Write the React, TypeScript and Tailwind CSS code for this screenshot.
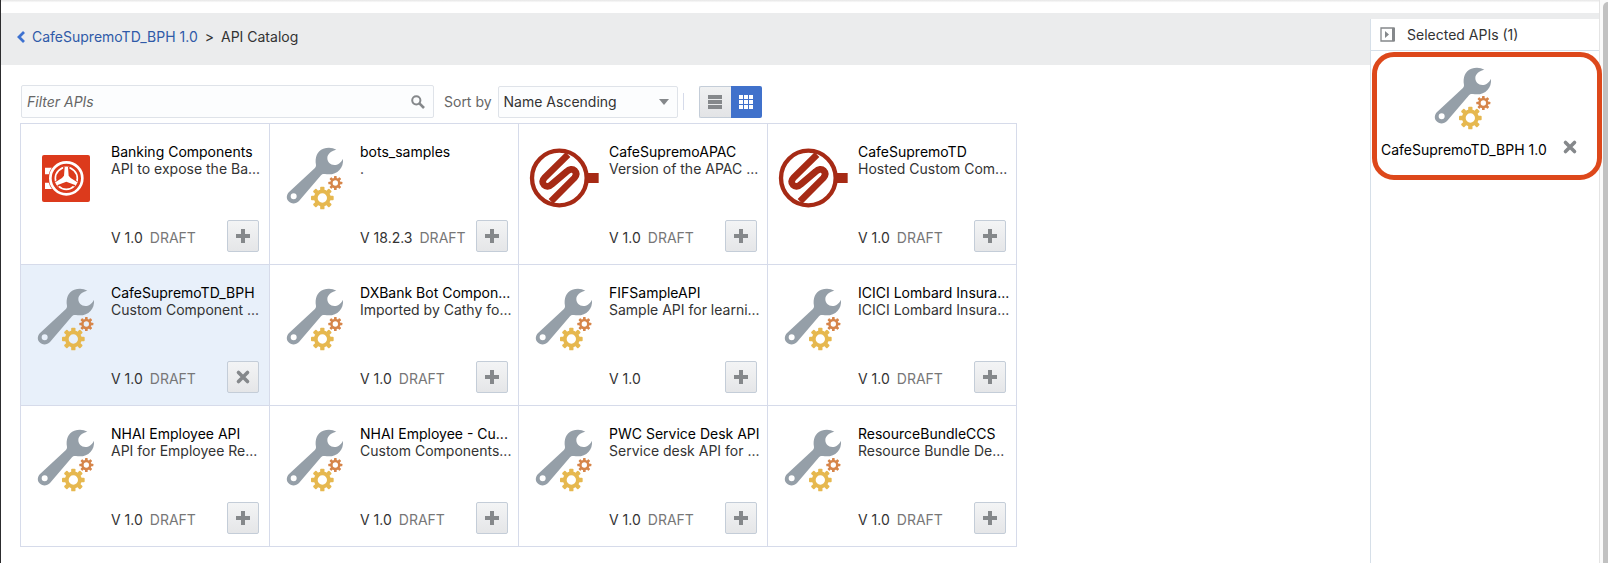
import React from "react";

type Art = "wrench" | "vault" | "supremo";
type Api = { name: string; text: string; version: string; draft: boolean; art: Art; selected?: boolean };

const apis: Api[] = [
  { name: "Banking Components", text: "API to expose the Ba...", version: "V 1.0", draft: true, art: "vault" },
  { name: "bots_samples", text: ".", version: "V 18.2.3", draft: true, art: "wrench" },
  { name: "CafeSupremoAPAC", text: "Version of the APAC ...", version: "V 1.0", draft: true, art: "supremo" },
  { name: "CafeSupremoTD", text: "Hosted Custom Com...", version: "V 1.0", draft: true, art: "supremo" },
  { name: "CafeSupremoTD_BPH", text: "Custom Component ...", version: "V 1.0", draft: true, art: "wrench", selected: true },
  { name: "DXBank Bot Compon...", text: "Imported by Cathy fo...", version: "V 1.0", draft: true, art: "wrench" },
  { name: "FIFSampleAPI", text: "Sample API for learni...", version: "V 1.0", draft: false, art: "wrench" },
  { name: "ICICI Lombard Insura...", text: "ICICI Lombard Insura...", version: "V 1.0", draft: true, art: "wrench" },
  { name: "NHAI Employee API", text: "API for Employee Re...", version: "V 1.0", draft: true, art: "wrench" },
  { name: "NHAI Employee - Cu...", text: "Custom Components...", version: "V 1.0", draft: true, art: "wrench" },
  { name: "PWC Service Desk API", text: "Service desk API for ...", version: "V 1.0", draft: true, art: "wrench" },
  { name: "ResourceBundleCCS", text: "Resource Bundle De...", version: "V 1.0", draft: true, art: "wrench" },
];

function Gear({ x, y, r, color, hole }: { x: number; y: number; r: number; color: string; hole: number }) {
  const body = r * 0.74;
  const ring = (body + hole) / 2;
  return (
    <g transform={`translate(${x} ${y})`} fill={color}>
      <circle r={ring} fill="none" stroke={color} strokeWidth={body - hole} />
      {[0, 45, 90, 135, 180, 225, 270, 315].map((a) => (
        <rect key={a} x={-r * 0.19} y={-r} width={r * 0.38} height={r * 0.4} rx={r * 0.08} transform={`rotate(${a})`} />
      ))}
    </g>
  );
}

function Wrench() {
  return (
    <svg viewBox="0 0 180 198" className="h-[66px] w-[60px]" aria-hidden="true">
      <path
        fillRule="evenodd"
        fill="#959fa8"
        d="M154 14C143 7 128 6 115 11C96 18 89 38 93 60C93 64 92 67 89 70L13 140C4 148 3 160 10 168C18 178 33 178 42 168L108 91C111 87 115 86 120 87C152 93 177 73 174 41C168 53 158 60 148 60C136 60 127 51 127 39C127 27 139 17 154 14ZM26 145A9 9 0 1 1 26 163A9 9 0 1 1 26 145Z"
      />
      <Gear x={151} y={114} r={21} hole={8} color="#d6854a" />
      <Gear x={112} y={159} r={34} hole={14} color="#e6b84f" />
    </svg>
  );
}

function Vault() {
  return (
    <svg viewBox="0 0 144 141" className="h-[47px] w-[48px]" aria-hidden="true">
      <rect width="144" height="141" rx="6" fill="#dc3a1c" />
      <path d="M9 38H31V58H9ZM9 83H31V102H9Z" fill="#fff" />
      <circle cx="73" cy="70" r="54" fill="#dc3a1c" />
      <circle cx="73" cy="70" r="48" fill="none" stroke="#fff" strokeWidth="8" />
      <circle cx="73" cy="70" r="33" fill="none" stroke="#fff" strokeWidth="5" />
      <path d="M73 70V36M73 70L44 87M73 70L102 87" stroke="#dc3a1c" strokeWidth="19" />
      <path d="M68 36H78L80 62L86 69L106 82L101 91L73 80L45 91L40 82L60 69L66 62Z" fill="#fff" />
    </svg>
  );
}

function Supremo() {
  return (
    <svg viewBox="0 0 210 180" className="h-[60px] w-[70px]" aria-hidden="true">
      <g fill="none" stroke="#a62a15" strokeLinejoin="round">
        <circle cx="91" cy="90" r="82" strokeWidth="13" />
        <path d="M174 90H209" strokeWidth="30" />
        <path d="M117 20L47 89C39 97 39 105 45 111C51 117 60 117 68 109L113 71C121 63 131 62 137 68C143 74 143 82 136 90L66 160" strokeWidth="20" />
      </g>
    </svg>
  );
}

function ApiArt({ art }: { art: Art }) {
  if (art === "vault") return <Vault />;
  if (art === "supremo") return <Supremo />;
  return <Wrench />;
}

function Mark({ cross }: { cross?: boolean }) {
  return (
    <svg viewBox="0 0 16 16" className="size-4" aria-hidden="true">
      <path
        d={cross ? "M3.5 3.5L12.5 12.5M12.5 3.5L3.5 12.5" : "M8 1V15M1 8H15"}
        stroke="#85888b"
        strokeWidth={cross ? 3.6 : 4}
        strokeLinecap={cross ? "round" : "butt"}
      />
    </svg>
  );
}

function ApiCard({ api }: { api: Api }) {
  return (
    <li className={`flex h-[141px] border-r border-b border-[#d6dbea] ${api.selected ? "bg-[#e8f0fa]" : "bg-white"}`}>
      <div className="flex w-[90px] shrink-0 justify-center pt-[21px]">
        <div className="flex h-[66px] items-center">
          <ApiArt art={api.art} />
        </div>
      </div>
      <div className="flex min-w-0 flex-1 flex-col pt-[19px] pb-3">
        <h2 className="leading-[17px] whitespace-nowrap text-black">{api.name}</h2>
        <p className="leading-[17px] whitespace-nowrap text-[#333]">{api.text}</p>
        <div className="mt-auto flex items-center justify-between pr-[10px]">
          <p className="flex gap-[7px] pt-1 text-[#333]">
            <span>{api.version}</span>
            {api.draft && <span className="text-[#777]">DRAFT</span>}
          </p>
          <button
            type="button"
            aria-label={`${api.selected ? "Remove" : "Add"} ${api.name}`}
            className="flex size-8 items-center justify-center rounded-xs border border-[#c4cdd8] bg-linear-to-b from-[#f3f4f5] to-[#e5e6e8]"
          >
            <Mark cross={api.selected} />
          </button>
        </div>
      </div>
    </li>
  );
}

export default function App() {
  return (
    <div className="flex min-h-screen border-l border-[#2c2c2e] bg-white font-[Inter,sans-serif] text-[14px] leading-5 text-[#333]">
      <div className="flex min-w-0 flex-1 flex-col border-r border-[#e4e4e4]">
        <div className="h-[13px] bg-linear-to-b from-[#e6e6e6] to-white to-20%" />
        <div className="flex flex-1">
          <main className="min-w-0 flex-1">
            <nav aria-label="Breadcrumb" className="flex h-[52px] items-start bg-[#ebeced] pt-[14px] pl-4">
              <a href="#api" className="flex items-center text-[#2f5aa8]">
                <svg viewBox="0 0 8 12" className="mr-[7px] h-3 w-2" aria-hidden="true">
                  <path d="M7 1L2 6L7 11" fill="none" stroke="#3d71d0" strokeWidth="2.8" />
                </svg>
                CafeSupremoTD_BPH 1.0
              </a>
              <span className="mx-[7px]">&gt;</span>
              <span>API Catalog</span>
            </nav>
            <div className="px-[19px] pt-5">
              <div className="flex items-center pl-px">
                <label className="flex h-[33px] w-[413px] items-center rounded-xs border border-[#dfe3e9] bg-[#fcfdfe] pr-2 pl-[5px]">
                  <input
                    aria-label="Filter APIs"
                    placeholder="Filter APIs"
                    className="min-w-0 flex-1 bg-transparent outline-none placeholder:text-[#666] placeholder:italic"
                  />
                  <svg viewBox="0 0 14 14" className="size-[14px]" aria-hidden="true">
                    <circle cx="5.3" cy="5.3" r="4.1" fill="none" stroke="#85888b" strokeWidth="2" />
                    <path d="M8.4 8.4L13 13" stroke="#85888b" strokeWidth="2.6" />
                  </svg>
                </label>
                <label htmlFor="sort" className="mr-[6px] ml-[10px] text-[#666]">Sort by</label>
                <div className="grid w-[180px] items-center">
                  <select
                    id="sort"
                    className="col-start-1 row-start-1 h-8 w-full appearance-none rounded-xs border border-[#dfe3e9] bg-[#fcfdfe] pl-[5px] text-[#333]"
                  >
                    <option>Name Ascending</option>
                    <option>Name Descending</option>
                  </select>
                  <svg viewBox="0 0 10 6" className="pointer-events-none col-start-1 row-start-1 mr-[9px] h-[6px] w-[10px] justify-self-end" aria-hidden="true">
                    <path d="M0 0H10L5 6Z" fill="#85888b" />
                  </svg>
                </div>
                <div className="mx-[5px] h-[17px] w-px bg-[#d6dbea]" />
                <div className="ml-[10px] flex">
                  <button
                    type="button"
                    aria-label="List view"
                    className="flex h-8 w-8 items-center justify-center rounded-l-xs border border-r-0 border-[#c4cdd8] bg-linear-to-b from-[#f0f1f2] to-[#e3e4e6]"
                  >
                    <svg viewBox="0 0 14 14" className="size-[14px]" fill="#85888b" aria-hidden="true">
                      <path d="M0 0H14V4H0ZM0 5H14V9H0ZM0 10H14V14H0Z" />
                    </svg>
                  </button>
                  <button
                    type="button"
                    aria-label="Grid view"
                    aria-pressed="true"
                    className="flex h-8 w-[31px] items-center justify-center rounded-r-xs bg-[#4071cb]"
                  >
                    <svg viewBox="0 0 14 14" className="size-[14px]" fill="#fff" aria-hidden="true">
                      <path d="M0 0H4V4H0ZM5 0H9V4H5ZM10 0H14V4H10ZM0 5H4V9H0ZM5 5H9V9H5ZM10 5H14V9H10ZM0 10H4V14H0ZM5 10H9V14H5ZM10 10H14V14H10Z" />
                    </svg>
                  </button>
                </div>
              </div>
              <ul className="mt-[5px] grid w-fit grid-cols-[repeat(4,249px)] border-t border-l border-[#d6dbea]">
                {apis.map((api) => (
                  <ApiCard key={api.name} api={api} />
                ))}
              </ul>
            </div>
          </main>
          <aside className="flex w-[229px] flex-col">
            <div className="h-[6px] bg-[#ebeced]" />
            <div className="flex-1 border-l border-[#d6dfe8]">
              <header className="flex h-8 items-center border-b border-[#d6dfe8] pl-[9px]">
                <button type="button" aria-label="Collapse panel">
                  <svg viewBox="0 0 15 15" className="size-[15px]" aria-hidden="true">
                    <path d="M1 1H14V14H1Z" fill="none" stroke="#85888b" strokeWidth="1.3" />
                    <path d="M12 1H15V14H12ZM5 4V11L9 7.5Z" fill="#85888b" />
                  </svg>
                </button>
                <h1 className="ml-3">Selected APIs (1)</h1>
              </header>
              <section className="relative z-10 -mr-[3px] ml-px mt-px flex h-32 flex-col rounded-[22px] border-[5px] border-[#dd481b] pt-2">
                <div className="pl-[56px]">
                  <Wrench />
                </div>
                <div className="mt-2 flex items-start pl-1 text-black">
                  <span className="pt-px">CafeSupremoTD_BPH 1.0</span>
                  <button type="button" aria-label="Remove CafeSupremoTD_BPH" className="ml-[15px]">
                    <Mark cross />
                  </button>
                </div>
              </section>
            </div>
          </aside>
        </div>
      </div>
      <div className="flex w-2 bg-[#fafafa] pt-[2px] pl-[3px]">
        <div className="flex-1 rounded-tl-md bg-[#c1c1c1]" />
      </div>
    </div>
  );
}
